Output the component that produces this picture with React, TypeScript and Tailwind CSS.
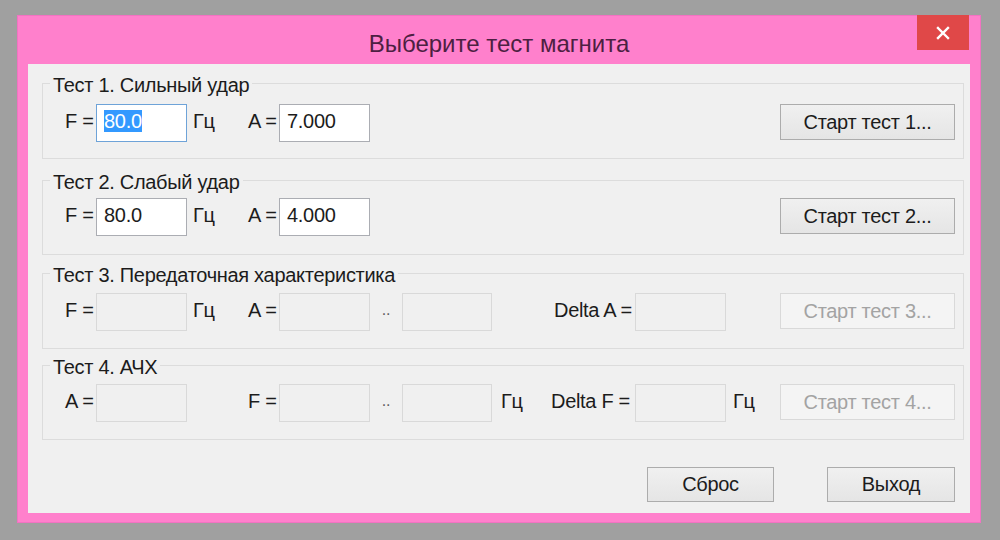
import type { ReactNode } from 'react'

function Label({ children, className = '' }: { children?: ReactNode; className?: string }) {
  return (
    <span className={`shrink-0 whitespace-nowrap pt-[6px] leading-[22px] ${className}`}>
      {children}
    </span>
  )
}

function Field({
  value,
  selected,
  disabled,
  width = 'w-[91px]',
}: {
  value?: string
  selected?: boolean
  disabled?: boolean
  width?: string
}) {
  const look = disabled
    ? 'border-[#d9d9d9] bg-[#f0f0f0]'
    : selected
      ? 'border-[#6ea3d8] bg-white'
      : 'border-[#abadb3] bg-white'
  return (
    <div className={`${width} ${look} h-[38px] shrink-0 border pl-[7px] pt-[5px] leading-[22px] whitespace-nowrap`}>
      {selected ? (
        <span className="inline-block h-[22px] bg-[#3399ff] leading-[22px] text-white">{value}</span>
      ) : (
        value
      )}
    </div>
  )
}

function StartButton({ n, disabled }: { n: number; disabled?: boolean }) {
  return (
    <button
      className={`h-[36px] w-[175px] shrink-0 border text-center leading-[34px] whitespace-nowrap ${
        disabled
          ? 'border-[#d9d9d9] bg-[#f4f4f4] text-[#a3a3a3]'
          : 'border-[#acacac] bg-gradient-to-b from-[#f0f0f0] to-[#e5e5e5] text-[#1c1c1c]'
      }`}
    >
      Старт тест {n}...
    </button>
  )
}

function Group({
  title,
  className,
  inner,
  children,
}: {
  title: string
  className: string
  inner: string
  children: ReactNode
}) {
  return (
    <fieldset className={`ml-[14px] mr-[6px] border border-[#dcdcdc] ${className}`}>
      <legend className="ml-[7px] px-[3px] pt-[4px] leading-[22px] whitespace-nowrap">{title}</legend>
      <div className={`flex h-[38px] items-start pl-[22px] pr-[8px] box-content ${inner}`}>{children}</div>
    </fieldset>
  )
}

export default function App() {
  return (
    <div className="h-[540px] w-[1000px] overflow-hidden bg-[#a0a0a0] pl-[17px] pt-[15px] font-['Liberation_Sans',Arial,sans-serif] text-[20px] tracking-[-0.3px] text-[#1c1c1c]">
      <div className="relative flex h-[508px] w-[964px] flex-col border border-[#f272c2] bg-[#ff80cc]">
        {/* title bar */}
        <div className="h-[48px] shrink-0 pt-[11px] text-center text-[24px] leading-[34px] tracking-normal text-[#4d1f42]">
          Выберите тест магнита
        </div>
        <button className="absolute right-[11px] top-[-1px] flex h-[35px] w-[52px] items-center justify-center bg-[#e04848]">
          <svg width="14" height="14" viewBox="0 0 14 14">
            <path d="M2 2 L12 12 M12 2 L2 12" stroke="#ffffff" strokeWidth="2.4" strokeLinecap="square" />
          </svg>
        </button>

        {/* client area */}
        <div className="mx-[10px] flex h-[449px] flex-col bg-[#f0f0f0]">
          <Group title="Тест 1. Сильный удар" className="mt-[6px]" inner="pt-[8px] pb-[16px]">
            <Label className="w-[31px]">F =</Label>
            <Field value="80.0" selected />
            <Label className="w-[61px] pl-[6px]">Гц</Label>
            <Label className="w-[31px]">A =</Label>
            <Field value="7.000" />
            <div className="flex-1" />
            <StartButton n={1} />
          </Group>

          <Group title="Тест 2. Слабый удар" className="mt-[8px]" inner="pt-[5px] pb-[18px]">
            <Label className="w-[31px]">F =</Label>
            <Field value="80.0" />
            <Label className="w-[61px] pl-[6px]">Гц</Label>
            <Label className="w-[31px]">A =</Label>
            <Field value="4.000" />
            <div className="flex-1" />
            <StartButton n={2} />
          </Group>

          <Group title="Тест 3. Передаточная характеристика" className="mt-[5px]" inner="pt-[7px] pb-[17px]">
            <Label className="w-[31px]">F =</Label>
            <Field disabled />
            <Label className="w-[61px] pl-[6px]">Гц</Label>
            <Label className="w-[31px]">A =</Label>
            <Field disabled />
            <Label className="w-[32px] text-center text-[16px] text-[#606060]">..</Label>
            <Field disabled width="w-[90px]" />
            <div className="w-[62px] shrink-0" />
            <Label className="w-[81px]">Delta A =</Label>
            <Field disabled />
            <div className="flex-1" />
            <StartButton n={3} disabled />
          </Group>

          <Group title="Тест 4. АЧХ" className="mt-[3px]" inner="pt-[6px] pb-[17px]">
            <Label className="w-[31px]">A =</Label>
            <Field disabled />
            <div className="w-[61px] shrink-0" />
            <Label className="w-[31px]">F =</Label>
            <Field disabled />
            <Label className="w-[32px] text-center text-[16px] text-[#606060]">..</Label>
            <Field disabled width="w-[90px]" />
            <Label className="w-[59px] pl-[9px]">Гц</Label>
            <Label className="w-[84px]">Delta F =</Label>
            <Field disabled />
            <Label className="pl-[7px]">Гц</Label>
            <div className="flex-1" />
            <StartButton n={4} disabled />
          </Group>

          <div className="mt-[27px] flex justify-end gap-[53px] pr-[15px]">
            <button className="h-[35px] w-[127px] border border-[#acacac] bg-gradient-to-b from-[#f0f0f0] to-[#e5e5e5] leading-[33px]">
              Сброс
            </button>
            <button className="h-[35px] w-[128px] border border-[#acacac] bg-gradient-to-b from-[#f0f0f0] to-[#e5e5e5] leading-[33px]">
              Выход
            </button>
          </div>
        </div>
      </div>
    </div>
  )
}
